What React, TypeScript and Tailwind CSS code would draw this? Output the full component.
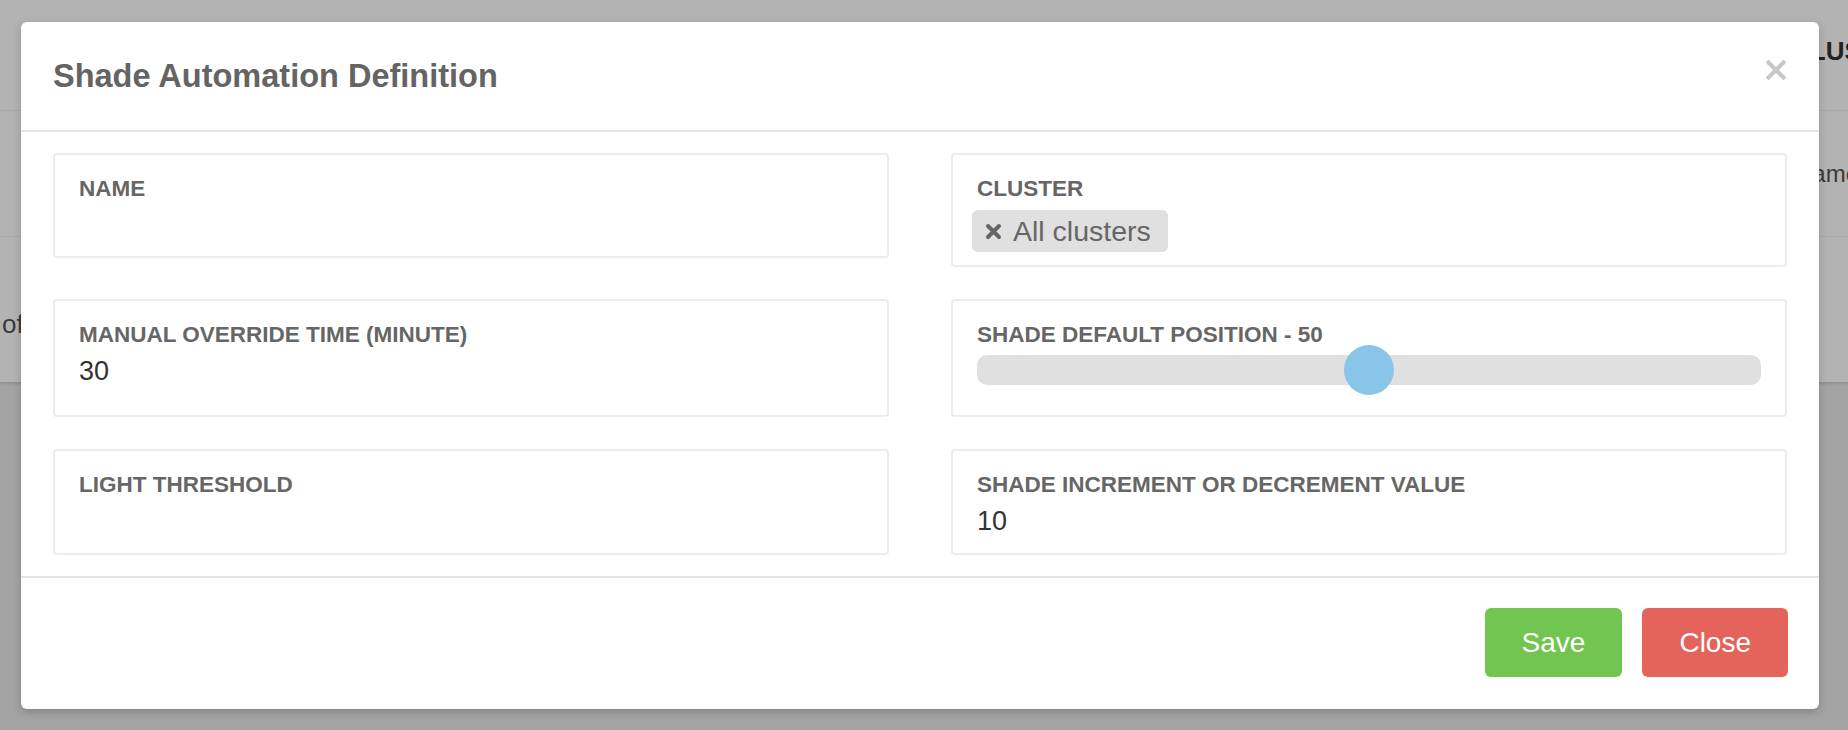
import React from "react";

// Dimmed page that sits behind the modal backdrop
function Backdrop() {
  return (
    <div className="flex flex-col">
      <div className="flex flex-col bg-[#b3b3b3] shadow-[0_2px_2px_rgba(0,0,0,0.12)]">
        <div className="flex h-[111px] items-center border-b border-[#a9a9a9] pl-[1791px] pb-[8px] whitespace-nowrap">
          <span className="text-[26px] font-bold text-[#222]">CLUSTER</span>
        </div>
        <div className="flex h-[126px] items-center border-b border-[#a9a9a9] pl-[1795px] whitespace-nowrap">
          <span className="text-[24px] text-[#3a3a3a]">Name</span>
        </div>
        <div className="h-[145px] pt-[72px] pl-[2px]">
          <span className="text-[26px] leading-[30px] text-[#3a3a3a]">of</span>
        </div>
      </div>
    </div>
  );
}

function CloseIcon() {
  return (
    <svg width="20" height="20" viewBox="0 0 20 20" className="mb-[12px]">
      <path d="M2.5 2.5 L17.5 17.5 M17.5 2.5 L2.5 17.5" stroke="#c8c8c8" strokeWidth="4.2" strokeLinecap="square" />
    </svg>
  );
}

function ChipX() {
  return (
    <svg width="17" height="17" viewBox="0 0 17 17">
      <path d="M3 3 L14 14 M14 3 L3 14" stroke="#666" strokeWidth="4" strokeLinecap="round" />
    </svg>
  );
}

function Card({ label, className, children }: { label: string; className: string; children?: React.ReactNode }) {
  return (
    <div className={`flex flex-col rounded-[4px] border-2 border-[#ececec] px-[24px] pt-[21px] ${className}`}>
      <div className="text-[22.5px] font-bold leading-[25px] text-[#666]">{label}</div>
      {children}
    </div>
  );
}

function Value({ children }: { children: React.ReactNode }) {
  return <div className="mt-[9px] text-[27px] leading-[31px] text-[#333]">{children}</div>;
}

function Slider({ value }: { value: number }) {
  return (
    <div className="relative mt-[8px] h-[30px] rounded-[10px] bg-[#e0e0e0]">
      <div
        className="absolute top-1/2 h-[50px] w-[50px] -translate-x-1/2 -translate-y-1/2 rounded-full bg-[#89c4e9]"
        style={{ left: `${value}%` }}
      />
    </div>
  );
}

export default function App() {
  const position = 50;
  return (
    <div className="relative h-[730px] w-[1848px] overflow-hidden bg-[#a4a4a4] font-['Liberation_Sans',Arial,sans-serif]">
      <Backdrop />

      <div className="absolute left-[21px] top-[22px] w-[1798px] rounded-[6px] bg-white shadow-[0_3px_9px_rgba(0,0,0,0.2)]">
        {/* header */}
        <div className="flex h-[110px] items-center justify-between border-b-2 border-[#e5e5e5] pl-[32px] pr-[33px]">
          <h4 className="text-[32.5px] font-bold leading-[38px] text-[#646464]">Shade Automation Definition</h4>
          <CloseIcon />
        </div>

        {/* body */}
        <div className="grid grid-cols-2 items-start gap-x-[62px] gap-y-[32px] px-[32px] pt-[21px] pb-[21px]">
          <Card label="NAME" className="h-[105px]" />
          <Card label="CLUSTER" className="h-[114px]">
            <div className="-ml-[5px] mt-[9px] flex h-[42px] items-center self-start rounded-[6px] bg-[#e0e0e0] pl-[13px] pr-[17px]">
              <ChipX />
              <span className="ml-[11px] text-[28.5px] leading-none text-[#666]">All clusters</span>
            </div>
          </Card>

          <Card label="MANUAL OVERRIDE TIME (MINUTE)" className="h-[118px]">
            <Value>30</Value>
          </Card>
          <Card label={`SHADE DEFAULT POSITION - ${position}`} className="h-[118px]">
            <Slider value={position} />
          </Card>

          <Card label="LIGHT THRESHOLD" className="h-[106px]" />
          <Card label="SHADE INCREMENT OR DECREMENT VALUE" className="h-[106px]">
            <Value>10</Value>
          </Card>
        </div>

        {/* footer */}
        <div className="flex justify-end gap-[20px] border-t-2 border-[#e5e5e5] pt-[30px] pb-[32px] pr-[31px]">
          <button className="h-[69px] rounded-[6px] bg-[#72c550] px-[37px] text-[28px] text-white">Save</button>
          <button className="h-[69px] rounded-[6px] bg-[#e4645b] px-[37px] text-[28px] text-white">Close</button>
        </div>
      </div>
    </div>
  );
}
